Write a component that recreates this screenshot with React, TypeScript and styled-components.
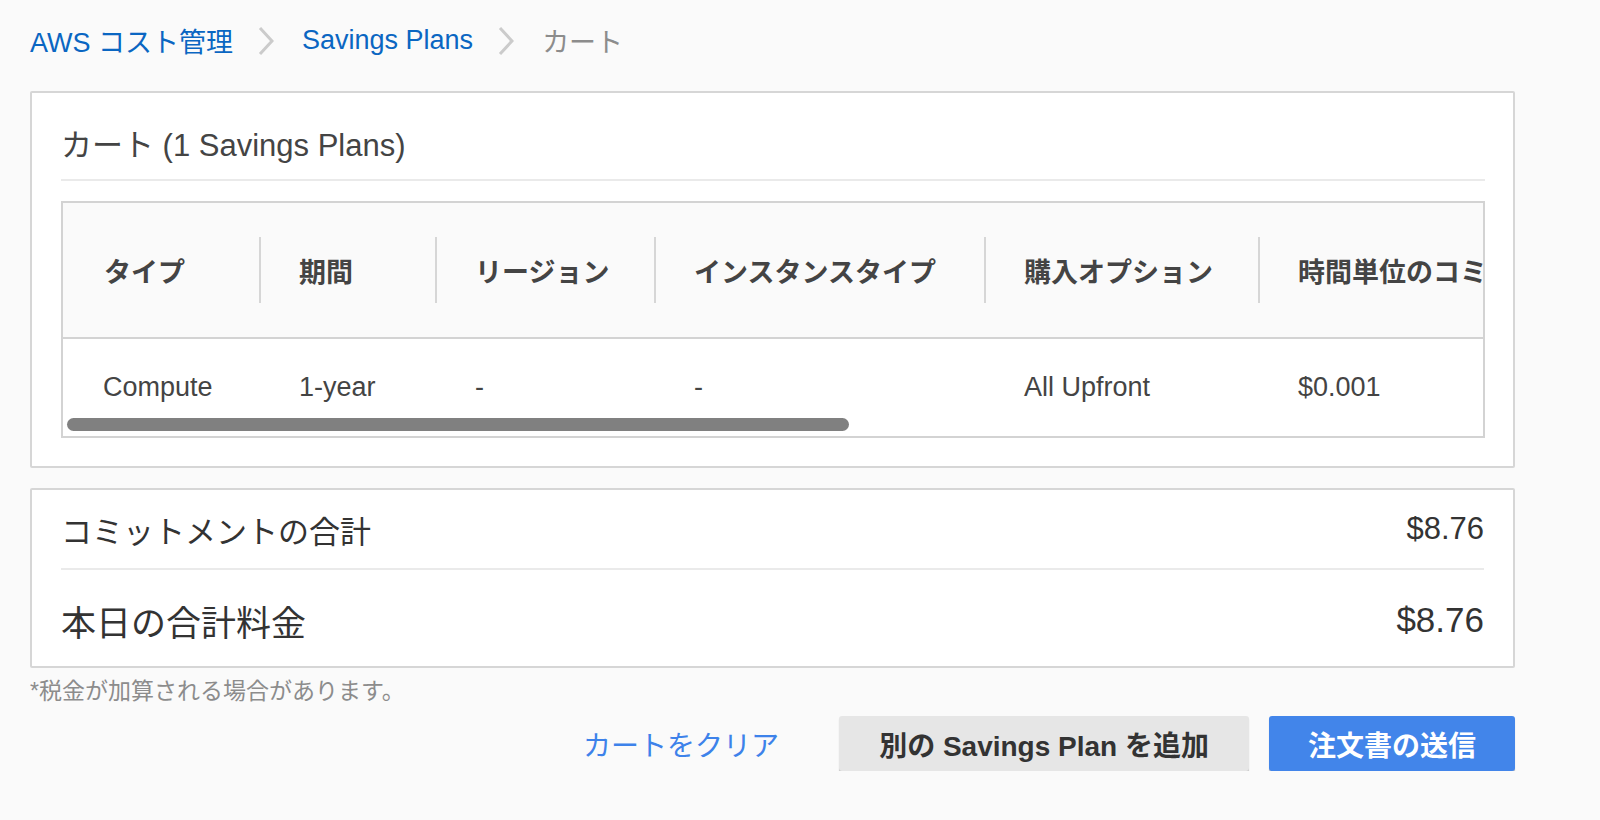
import { createGlobalStyle, styled } from "styled-components";

const GlobalStyle = createGlobalStyle`
  html, body {
    margin: 0;
    padding: 0;
    background: #fafafa;
  }
  body {
    font-family: "Liberation Sans", "Noto Sans CJK JP", sans-serif;
    color: #444;
  }
`;

const columns = [
  { title: "タイプ", width: 196, value: "Compute" },
  { title: "期間", width: 176, value: "1-year" },
  { title: "リージョン", width: 219, value: "-" },
  { title: "インスタンスタイプ", width: 330, value: "-" },
  { title: "購入オプション", width: 274, value: "All Upfront" },
  { title: "時間単位のコミットメント", width: 420, value: "$0.001" },
];

function Chevron() {
  return (
    <ChevronIcon width="16" height="32" viewBox="0 0 16 32">
      <polyline points="2,3 14,16 2,29" fill="none" stroke="#cbcbcb" strokeWidth="3" />
    </ChevronIcon>
  );
}

export default function App() {
  return (
    <Page>
      <GlobalStyle />
      <Breadcrumb>
        <Crumb>AWS コスト管理</Crumb>
        <Chevron />
        <Crumb>Savings Plans</Crumb>
        <Chevron />
        <Crumb $current>カート</Crumb>
      </Breadcrumb>

      <Panel>
        <CartBody>
          <PanelTitle>カート (1 Savings Plans)</PanelTitle>
          <TableFrame>
            <Table>
              <colgroup>
                {columns.map((c) => (
                  <col key={c.title} style={{ width: c.width }} />
                ))}
              </colgroup>
              <thead>
                <tr>
                  {columns.map((c, i) => (
                    <HeadCell key={c.title}>
                      {i > 0 && <Separator />}
                      {c.title}
                    </HeadCell>
                  ))}
                </tr>
              </thead>
              <tbody>
                <tr>
                  {columns.map((c) => (
                    <BodyCell key={c.title}>{c.value}</BodyCell>
                  ))}
                </tr>
              </tbody>
            </Table>
            <ScrollThumb />
          </TableFrame>
        </CartBody>
      </Panel>

      <Panel>
        <TotalRow>
          <TotalLabel>コミットメントの合計</TotalLabel>
          <TotalValue>$8.76</TotalValue>
        </TotalRow>
        <TotalRow $big>
          <TotalLabel>本日の合計料金</TotalLabel>
          <TotalValue>$8.76</TotalValue>
        </TotalRow>
      </Panel>

      <Note>*税金が加算される場合があります。</Note>

      <Actions>
        <LinkButton>カートをクリア</LinkButton>
        <Button>別の Savings Plan を追加</Button>
        <Button $primary>注文書の送信</Button>
      </Actions>
    </Page>
  );
}

const Page = styled.div`
  width: 1485px;
  padding: 0 85px 0 30px;
`;

const Breadcrumb = styled.nav`
  height: 91px;
  display: flex;
  align-items: center;
  padding-bottom: 10px;
  box-sizing: border-box;
`;

const Crumb = styled.span<{ $current?: boolean }>`
  font-size: 27px;
  color: ${(p) => (p.$current ? "#8c8c8c" : "#0a66c2")};
`;

const ChevronIcon = styled.svg`
  margin: 0 28px 0 25px;
`;

const Panel = styled.section`
  background: #fff;
  border: 2px solid #d6d6d6;
  border-radius: 2px;
  margin-bottom: 20px;
`;

const CartBody = styled.div`
  padding: 0 28px 28px 29px;
`;

const PanelTitle = styled.h2`
  margin: 0;
  height: 88px;
  display: flex;
  align-items: center;
  padding-top: 12px;
  box-sizing: border-box;
  font-size: 31px;
  font-weight: 400;
  color: #444;
  border-bottom: 2px solid #eaeaea;
  margin-bottom: 20px;
`;

const TableFrame = styled.div`
  position: relative;
  border: 2px solid #d3d3d3;
  overflow: hidden;
`;

const Table = styled.table`
  border-collapse: collapse;
  table-layout: fixed;
  width: 1615px;
`;

const HeadCell = styled.th`
  position: relative;
  height: 134px;
  padding: 0 0 0 40px;
  text-align: left;
  white-space: nowrap;
  background: #fafafa;
  font-size: 27px;
  font-weight: 700;
  color: #444;
  border-bottom: 2px solid #d3d3d3;
  &:first-child {
    padding-left: 41px;
  }
`;

const Separator = styled.span`
  position: absolute;
  left: 0;
  top: 34px;
  height: 66px;
  border-left: 2px solid #d6d6d6;
`;

const BodyCell = styled.td`
  height: 97px;
  padding: 0 0 0 40px;
  white-space: nowrap;
  font-size: 27px;
  color: #444;
`;

const ScrollThumb = styled.div`
  position: absolute;
  left: 4px;
  bottom: 5px;
  width: 782px;
  height: 13px;
  border-radius: 7px;
  background: #808080;
`;

const TotalRow = styled.div<{ $big?: boolean }>`
  display: flex;
  align-items: center;
  justify-content: space-between;
  margin: 0 29px;
  height: ${(p) => (p.$big ? "98px" : "78px")};
  font-size: ${(p) => (p.$big ? "35px" : "31px")};
  padding-top: ${(p) => (p.$big ? "4px" : "0")};
  box-sizing: border-box;
  color: #333;
  & + & {
    border-top: 2px solid #eaeaea;
  }
`;

const TotalLabel = styled.span``;

const TotalValue = styled.span``;

const Note = styled.p`
  margin: -14px 0 0;
  font-size: 23px;
  color: #8c8c8c;
  height: 34px;
  line-height: 34px;
`;

const Actions = styled.div`
  display: flex;
  justify-content: flex-end;
  align-items: center;
  gap: 20px;
  margin-top: 8px;
`;

const LinkButton = styled.button`
  border: none;
  background: none;
  padding: 0;
  margin-right: 40px;
  font-family: inherit;
  font-size: 28px;
  color: #3d82ea;
  cursor: pointer;
`;

const Button = styled.button<{ $primary?: boolean }>`
  height: 55px;
  padding: 0 ${(p) => (p.$primary ? "39px" : "40px")};
  border: none;
  border-radius: 3px;
  font-family: inherit;
  font-size: 28px;
  font-weight: 700;
  color: ${(p) => (p.$primary ? "#fff" : "#333")};
  background: ${(p) => (p.$primary ? "#4285ea" : "#e6e6e6")};
  box-shadow: 0 2px 1px rgba(0, 0, 0, 0.22);
  cursor: pointer;
`;
